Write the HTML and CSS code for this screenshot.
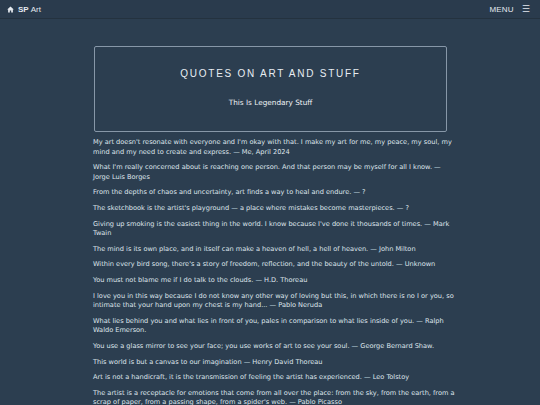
FILE: index.html
```html
<!DOCTYPE html>
<html>
<head>
<meta charset="utf-8">
<link rel="stylesheet" href="styles.css">
</head>
<body>
<header class="topbar">
  <a class="brand" href="#">
    <svg class="home" viewBox="0 0 10 10" width="7" height="7"><path d="M5 0.8 L0.3 5 L1.6 5 L1.6 9.2 L4 9.2 L4 6.4 L6 6.4 L6 9.2 L8.4 9.2 L8.4 5 L9.7 5 Z" fill="#e6ebf1"/></svg>
    <b>SP</b> Art
  </a>
  <a class="menu" href="#">MENU <span class="burger">☰</span></a>
</header>
<main class="page">
  <section class="hero">
    <h1>QUOTES ON ART AND STUFF</h1>
    <p class="sub">This Is Legendary Stuff</p>
  </section>
  <div class="quotes">
    <p>My art doesn't resonate with everyone and I'm okay with that. I make my art for me, my peace, my soul, my mind and my need to create and express. — Me, April 2024</p>
    <p>What I'm really concerned about is reaching one person. And that person may be myself for all I know. — Jorge Luis Borges</p>
    <p>From the depths of chaos and uncertainty, art finds a way to heal and endure. — ?</p>
    <p>The sketchbook is the artist's playground — a place where mistakes become masterpieces. — ?</p>
    <p>Giving up smoking is the easiest thing in the world. I know because I've done it thousands of times. — Mark Twain</p>
    <p>The mind is its own place, and in itself can make a heaven of hell, a hell of heaven. — John Milton</p>
    <p>Within every bird song, there's a story of freedom, reflection, and the beauty of the untold. — Unknown</p>
    <p>You must not blame me if I do talk to the clouds. — H.D. Thoreau</p>
    <p>I love you in this way because I do not know any other way of loving but this, in which there is no I or you, so intimate that your hand upon my chest is my hand... — Pablo Neruda</p>
    <p>What lies behind you and what lies in front of you, pales in comparison to what lies inside of you. — Ralph Waldo Emerson.</p>
    <p>You use a glass mirror to see your face; you use works of art to see your soul. — George Bernard Shaw.</p>
    <p>This world is but a canvas to our imagination — Henry David Thoreau</p>
    <p>Art is not a handicraft, it is the transmission of feeling the artist has experienced. — Leo Tolstoy</p>
    <p>The artist is a receptacle for emotions that come from all over the place: from the sky, from the earth, from a scrap of paper, from a passing shape, from a spider's web. — Pablo Picasso</p>
  </div>
</main>
</body>
</html>
```

FILE: styles.css
```css
html, body {
  margin: 0;
  padding: 0;
  background: #2c3e50;
  color: #e4e9ef;
}
body {
  font-family: "DejaVu Sans", Verdana, sans-serif;
  overflow: hidden;
  height: 405px;
  -webkit-font-smoothing: antialiased;
}
a { color: inherit; text-decoration: none; }
.topbar {
  height: 18px;
  display: flex;
  align-items: center;
  justify-content: space-between;
  padding: 0 10px 0 7px;
  background: #2a3b4d;
  border-bottom: 1px solid #24323f;
  font-family: "Liberation Sans", Arial, sans-serif;
  font-size: 8px;
}
.brand { display: flex; align-items: center; gap: 2px; }
.brand b { font-weight: bold; margin-left: 1px; }
.home { margin-right: 1px; }
.menu { display: flex; align-items: center; gap: 8px; letter-spacing: 0.2px; }
.burger { font-size: 9px; }
.page {
  width: 353px;
  margin: 27px auto 0;
  padding-left: 1px;
}
.hero {
  border: 1px solid #8797a8;
  border-radius: 2px;
  height: 86px;
  display: flex;
  flex-direction: column;
  align-items: center;
  box-sizing: border-box;
  padding-top: 21px;
}
.hero h1 {
  margin: 0;
  font-family: "Liberation Sans", Arial, sans-serif;
  font-weight: normal;
  font-size: 10px;
  letter-spacing: 1.75px;
  color: #e8edf2;
}
.sub {
  margin: 19px 0 0;
  font-size: 7.3px;
  color: #f0f3f6;
}
.quotes {
  margin-top: 6px;
  margin-right: -10px;
  margin-left: -1px;
}
.quotes p {
  margin: 0 0 6px;
  font-size: 6.6px;
  line-height: 9.6px;
  color: #dfe5ec;
}
```
